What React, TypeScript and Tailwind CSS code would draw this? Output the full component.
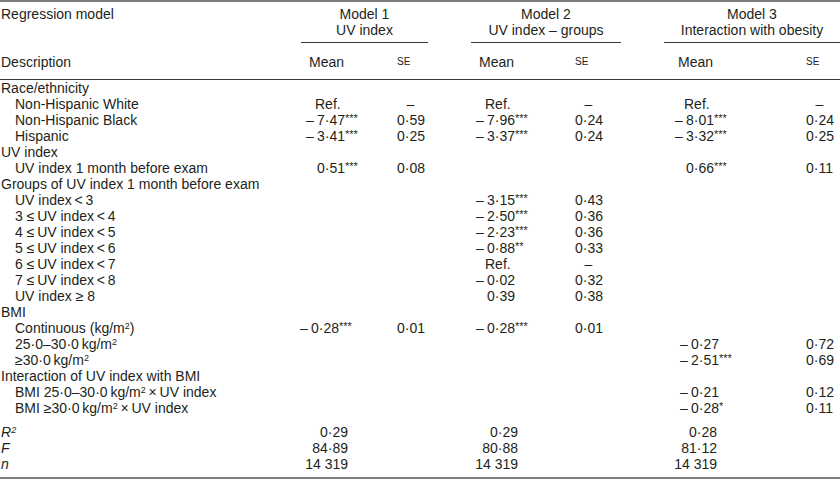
import React from "react";

type R = {
  label: React.ReactNode;
  head?: boolean;
  m1?: string; s1?: string;
  m2?: string; s2?: string;
  m3?: string; s3?: string;
  p1?: string; p3?: string;
};

const T = "\u2009";
const Sup2 = () => <sup className="text-[9px]">2</sup>;

const rows: R[] = [
  { label: "Race/ethnicity", head: true },
  { label: "Non-Hispanic White", m1: "Ref.", s1: "–", m2: "Ref.", s2: "–", m3: "Ref.", s3: "–" },
  { label: "Non-Hispanic Black", m1: "-7·47***", s1: "0·59", m2: "-7·96***", s2: "0·24", m3: "-8·01***", s3: "0·24" },
  { label: "Hispanic", m1: "-3·41***", s1: "0·25", m2: "-3·37***", s2: "0·24", m3: "-3·32***", s3: "0·25" },
  { label: "UV index", head: true },
  { label: "UV index 1 month before exam", m1: "0·51***", s1: "0·08", m3: "0·66***", s3: "0·11" },
  { label: "Groups of UV index 1 month before exam", head: true },
  { label: `UV index${T}<${T}3`, m2: "-3·15***", s2: "0·43" },
  { label: `3 ≤${T}UV index${T}<${T}4`, m2: "-2·50***", s2: "0·36" },
  { label: `4 ≤${T}UV index${T}<${T}5`, m2: "-2·23***", s2: "0·36" },
  { label: `5 ≤${T}UV index${T}<${T}6`, m2: "-0·88**", s2: "0·33" },
  { label: `6 ≤${T}UV index${T}<${T}7`, m2: "Ref.", s2: "–" },
  { label: `7 ≤${T}UV index${T}<${T}8`, m2: "-0·02", s2: "0·32" },
  { label: "UV index ≥ 8", m2: "0·39", s2: "0·38" },
  { label: "BMI", head: true },
  { label: <>Continuous (kg/m<Sup2 />)</>, m1: "-0·28***", s1: "0·01", m2: "-0·28***", s2: "0·01", p1: "pl-[0px] whitespace-nowrap" },
  { label: <>25·0–30·0{T}kg/m<Sup2 /></>, m3: "-0·27", s3: "0·72", p3: "pl-[11px] whitespace-nowrap" },
  { label: <>≥30·0{T}kg/m<Sup2 /></>, m3: "-2·51***", s3: "0·69", p3: "pl-[11px] whitespace-nowrap" },
  { label: "Interaction of UV index with BMI", head: true },
  { label: <>BMI 25·0–30·0{T}kg/m<Sup2 />{T}×{T}UV index</>, m3: "-0·21", s3: "0·12", p3: "pl-[11px] whitespace-nowrap" },
  { label: <>BMI ≥30·0{T}kg/m<Sup2 />{T}×{T}UV index</>, m3: "-0·28*", s3: "0·11", p3: "pl-[11px] whitespace-nowrap" },
];

const stats: { label: React.ReactNode; v: [string, string, string] }[] = [
  { label: <span className="italic">R<Sup2 /></span>, v: ["0·29", "0·29", "0·28"] },
  { label: <span className="italic">F</span>, v: ["84·89", "80·88", "81·12"] },
  { label: <span className="italic">n</span>, v: ["14 319", "14 319", "14 319"] },
];

function Stars({ s }: { s: string }) {
  if (!s) return null;
  return <span className="relative -top-[3px] text-[11px]">{s}</span>;
}

function Mean({ v, pad }: { v?: string; pad?: string }) {
  if (!v) return <div />;
  if (v === "Ref.") return <div className="pl-[15px]">Ref.</div>;
  const m = v.match(/^(-?)([\d·]+)(\**)$/);
  if (!m) return <div>{v}</div>;
  const neg = m[1] === "-";
  return (
    <div className={pad ?? "pl-[6px] whitespace-nowrap"}>
      <span className="inline-block w-[11px]">{neg ? "–" : ""}</span>
      <span>{m[2]}</span>
      <Stars s={m[3]} />
    </div>
  );
}

function SE({ v }: { v?: string }) {
  if (!v) return <div />;
  if (v === "–") return <div><span className="inline-block w-[27px] text-center">–</span></div>;
  return <div>{v}</div>;
}

export default function App() {
  return (
    <div className="w-[840px] h-[479px] bg-white text-[#231f20] text-[14px] leading-4 font-['Liberation_Sans',Arial,sans-serif] border-t-2 border-b-2 border-[#7d7d7d] flex flex-col">
      {/* Header row 1 */}
      <div className="grid grid-cols-[301px_127px_43px_150px_43px_176px]">
        <div className="pt-[4px] pl-[1px]">Regression model</div>
        <div className="pt-[4px] pb-[4px] text-center border-b border-[#3a3a3a]">
          <div>Model 1</div>
          <div>UV index</div>
        </div>
        <div />
        <div className="pt-[4px] pb-[4px] text-center border-b border-[#3a3a3a]">
          <div>Model 2</div>
          <div>UV index – groups</div>
        </div>
        <div />
        <div className="pt-[4px] pb-[4px] text-center border-b border-[#3a3a3a]">
          <div>Model 3</div>
          <div>Interaction with obesity</div>
        </div>
      </div>
      {/* Header row 2 */}
      <div className="grid grid-cols-[300px_97px_73px_105px_94px_137px_34px] pt-[11px] pb-[9px] border-b border-[#3a3a3a]">
        <div className="pl-[1px]">Description</div>
        <div className="pl-[9px]">Mean</div>
        <div className="text-[10px]">SE</div>
        <div className="pl-[9px]">Mean</div>
        <div className="text-[10px]">SE</div>
        <div className="pl-[9px]">Mean</div>
        <div className="text-[10px]">SE</div>
      </div>
      {/* Body */}
      <div className="flex flex-col">
        {rows.map((r, i) => (
          <div key={i} className="grid grid-cols-[300px_97px_73px_105px_94px_137px_34px] h-4">
            <div className={r.head ? "pl-[1px] whitespace-nowrap" : "pl-[15px] whitespace-nowrap"}>{r.label}</div>
            <Mean v={r.m1} pad={r.p1} />
            <SE v={r.s1} />
            <Mean v={r.m2} />
            <SE v={r.s2} />
            <Mean v={r.m3} pad={r.p3} />
            <SE v={r.s3} />
          </div>
        ))}
        <div className="h-[8px]" />
        {stats.map((s, i) => (
          <div key={i} className="grid grid-cols-[300px_97px_73px_105px_94px_137px_34px] h-4">
            <div className="pl-[1px]">{s.label}</div>
            <div><div className="w-[48px] text-right">{s.v[0]}</div></div>
            <div />
            <div><div className="w-[48px] text-right">{s.v[1]}</div></div>
            <div />
            <div><div className="w-[48px] text-right">{s.v[2]}</div></div>
            <div />
          </div>
        ))}
      </div>
    </div>
  );
}
